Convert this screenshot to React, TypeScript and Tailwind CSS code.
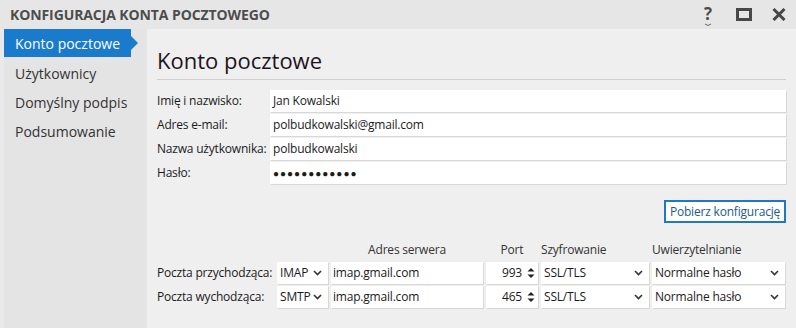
import React from 'react'

const ChevronDown = () => (
  <svg width="9" height="6" viewBox="0 0 9 6" className="shrink-0">
    <path d="M1 1l3.5 3.5L8 1" fill="none" stroke="#333" strokeWidth="1.6" />
  </svg>
)

const Spinner = () => (
  <svg width="8" height="14" viewBox="0 0 8 14" className="shrink-0">
    <path d="M0.5 5.5L4 2l3.5 3.5z" fill="#222" />
    <path d="M0.5 8.5L4 12l3.5-3.5z" fill="#222" />
  </svg>
)

const fieldShadow = 'bg-white shadow-[1px_1px_0_#d8d8d8]'

const Select = ({ value, className }: { value: string; className: string }) => (
  <div className={`${fieldShadow} h-[22px] flex items-center justify-between pl-[3px] pr-[6px] ${className}`}>
    <span>{value}</span>
    <ChevronDown />
  </div>
)

const TextRow = ({ label, value, secret }: { label: string; value: string; secret?: boolean }) => (
  <div className="flex items-center h-[22px]">
    <div className="w-[113px] shrink-0 whitespace-nowrap">{label}</div>
    <div className={`${fieldShadow} flex-1 h-[22px] flex items-center pl-[3px]`}>
      {secret ? <span className="text-[10px] tracking-[1px]">{value}</span> : value}
    </div>
  </div>
)

const ServerRow = ({ label, proto, host, port }: { label: string; proto: string; host: string; port: string }) => (
  <div className="flex items-center gap-[3px] h-[22px]">
    <div className="w-[117px] shrink-0 whitespace-nowrap">{label}</div>
    <Select value={proto} className="w-[51px]" />
    <div className={`${fieldShadow} w-[152px] h-[22px] flex items-center pl-[2px]`}>{host}</div>
    <div className={`${fieldShadow} w-[52px] h-[22px] flex items-center justify-end gap-[5px] pr-[3px]`}>
      <span>{port}</span>
      <Spinner />
    </div>
    <Select value="SSL/TLS" className="w-[108px]" />
    <Select value="Normalne hasło" className="w-[133px]" />
  </div>
)

export default function App() {
  const nav = ['Użytkownicy', 'Domyślny podpis', 'Podsumowanie']
  return (
    <div className="w-[796px] h-[328px] bg-[#e6e6e6] flex flex-col overflow-hidden text-[12px] text-[#1b1b1b] font-['Open_Sans',sans-serif]">
      {/* title bar */}
      <div className="h-[29px] shrink-0 flex items-center pl-[10px] pr-[10px]">
        <div className="font-bold text-[14px] text-[#4d4d4d] tracking-[-0.1px]">KONFIGURACJA KONTA POCZTOWEGO</div>
        <div className="ml-auto flex items-center">
          <div className="relative w-[12px] h-[20px] flex justify-center mr-[22px]">
            <span className="font-bold text-[17px] leading-[18px] text-[#4d4d4d]">?</span>
            <svg width="8" height="4" viewBox="0 0 8 4" className="absolute left-[2px] top-[18px]">
              <path d="M1 1q3 3 6 0" fill="none" stroke="#666" strokeWidth="1" />
            </svg>
          </div>
          <div className="w-[16px] h-[13px] border-[3px] border-[#474747] mr-[20px]" />
          <svg width="14" height="13" viewBox="0 0 14 13">
            <path d="M1.5 1l11 11M12.5 1l-11 11" stroke="#474747" strokeWidth="3" />
          </svg>
        </div>
      </div>

      <div className="flex flex-1 min-h-0">
        {/* sidebar */}
        <div className="w-[147px] shrink-0 bg-[#e4e4e4] border-l-[4px] border-[#eaeaea] pr-[16px]">
          <div className="relative h-[28px] bg-[#1a7bcc] text-white text-[14px] flex items-center pl-[11px]">
            Konto pocztowe
            <div className="absolute right-[-7px] top-[7px] w-0 h-0 border-y-[7px] border-y-transparent border-l-[7px] border-l-[#1a7bcc]" />
          </div>
          <div className="flex flex-col text-[14px] text-[#333] pl-[11px]">
            {nav.map((n) => (
              <div key={n} className="h-[29px] flex items-center pt-[3px]">{n}</div>
            ))}
          </div>
        </div>

        {/* content */}
        <div className="flex-1 bg-[#efefef] pl-[10px] pr-[10px] pt-[16px] tracking-[-0.2px]">
          <div className="text-[22px] leading-[30px] tracking-normal text-[#1c141c] pb-[4px] border-b border-[#cfcfcf]">Konto pocztowe</div>
          <div className="flex flex-col gap-[2px] mt-[10px]">
            <TextRow label="Imię i nazwisko:" value="Jan Kowalski" />
            <TextRow label="Adres e-mail:" value="polbudkowalski@gmail.com" />
            <TextRow label="Nazwa użytkownika:" value="polbudkowalski" />
            <TextRow label="Hasło:" value="●●●●●●●●●●●●" secret />
          </div>
          <div className="flex justify-end mt-[16px]">
            <button className="h-[23px] w-[122px] bg-white border-2 border-[#1f78c4] text-[#245a86] text-[12px] leading-none">
              Pobierz konfigurację
            </button>
          </div>
          <div className="flex gap-[3px] mt-[17px] h-[20px] items-center text-[#333]">
            <div className="w-[117px]" />
            <div className="w-[51px]" />
            <div className="w-[152px] text-center">Adres serwera</div>
            <div className="w-[52px] text-center">Port</div>
            <div className="w-[108px]">Szyfrowanie</div>
            <div className="w-[133px]">Uwierzytelnianie</div>
          </div>
          <div className="flex flex-col gap-[2px] mt-[2px]">
            <ServerRow label="Poczta przychodząca:" proto="IMAP" host="imap.gmail.com" port="993" />
            <ServerRow label="Poczta wychodząca:" proto="SMTP" host="imap.gmail.com" port="465" />
          </div>
        </div>
      </div>
    </div>
  )
}
